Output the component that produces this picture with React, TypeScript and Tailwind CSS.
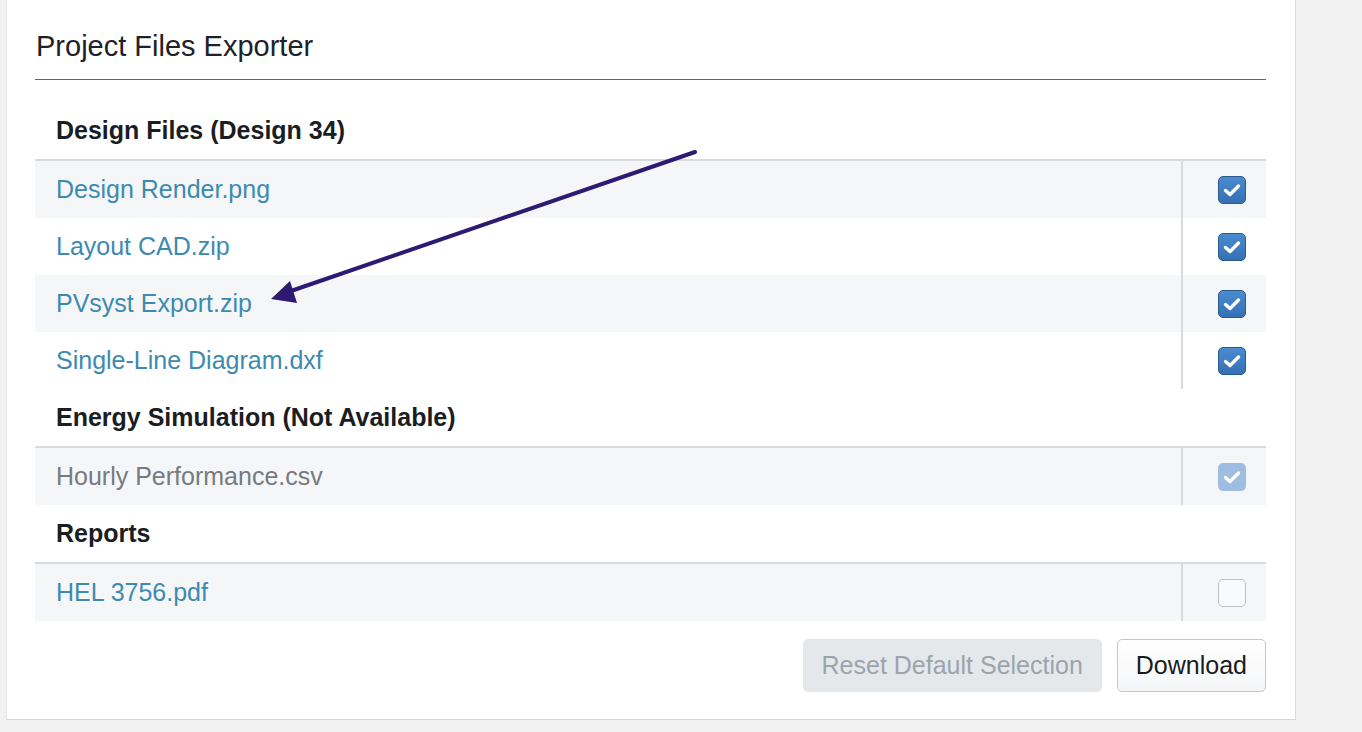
import React from 'react';

type FileRow = { name: string; checked: boolean; disabled?: boolean };

const sections: { title: string; rows: FileRow[] }[] = [
  {
    title: 'Design Files (Design 34)',
    rows: [
      { name: 'Design Render.png', checked: true },
      { name: 'Layout CAD.zip', checked: true },
      { name: 'PVsyst Export.zip', checked: true },
      { name: 'Single-Line Diagram.dxf', checked: true },
    ],
  },
  {
    title: 'Energy Simulation (Not Available)',
    rows: [{ name: 'Hourly Performance.csv', checked: true, disabled: true }],
  },
  {
    title: 'Reports',
    rows: [{ name: 'HEL 3756.pdf', checked: false }],
  },
];

const Checkbox: React.FC<{ checked: boolean; disabled?: boolean }> = ({ checked, disabled }) => {
  if (!checked) {
    return <div className="w-[28px] h-[28px] rounded-[5px] border border-[#bfc3c7] bg-[#f9fafb]" />;
  }
  return (
    <div
      className={
        disabled
          ? 'w-[28px] h-[28px] rounded-[5px] bg-[#9ebde0] flex items-center justify-center'
          : 'w-[28px] h-[28px] rounded-[5px] border border-[#2a5b8f] bg-gradient-to-b from-[#4b8bd0] to-[#3670b3] flex items-center justify-center'
      }
    >
      <svg width="20" height="16" viewBox="0 0 20 16" fill="none">
        <path d="M3.5 8.5 L8 12.5 L16.5 4" stroke="white" strokeWidth="3.4" strokeLinecap="round" strokeLinejoin="round" />
      </svg>
    </div>
  );
};

const App: React.FC = () => {
  return (
    <div className="relative w-[1362px] h-[732px] bg-[#f2f2f2] overflow-hidden font-['Liberation_Sans',Arial,sans-serif]">
      <div className="ml-[6px] w-[1290px] h-[720px] bg-white border-l border-[#e3e5e8] border-r border-b border-r-[#d6dde4] border-b-[#cfd8e1] pl-[28px] pr-[29px]">
        {/* Title */}
        <div className="pt-[29px] pb-[16px] border-b border-[#5f6770]">
          <h1 className="text-[29px] leading-[34px] text-[#1e2227] pl-[1px]">Project Files Exporter</h1>
        </div>

        <div className="pt-[22px]">
          {sections.map((section) => (
            <div key={section.title}>
              <div className="h-[59px] flex items-center pl-[21px] text-[25px] font-bold text-[#1a1d21] border-b-2 border-[#d8dadd]">
                {section.title}
              </div>
              {section.rows.map((row, i) => (
                <div
                  key={row.name}
                  className={`flex h-[57px] ${i % 2 === 0 ? 'bg-[#f5f6f8]' : 'bg-white'}`}
                >
                  <div
                    className={`flex-1 flex items-center pl-[21px] text-[25px] ${
                      row.disabled ? 'text-[#777b80]' : 'text-[#3d8ab0]'
                    }`}
                  >
                    {row.name}
                  </div>
                  <div className="w-[85px] border-l-2 border-[#d8dadd] flex items-center justify-end pr-[20px]">
                    <Checkbox checked={row.checked} disabled={row.disabled} />
                  </div>
                </div>
              ))}
            </div>
          ))}
        </div>

        <div className="flex justify-end gap-[15px] mt-[18px]">
          <button className="h-[53px] px-[19px] rounded-[5px] bg-[#e4e8eb] text-[25px] text-[#9ba4ac]">
            Reset Default Selection
          </button>
          <button className="h-[53px] px-[18px] rounded-[5px] border border-[#c3c7cb] bg-gradient-to-b from-white to-[#f5f6f7] text-[25px] text-[#1a1c1f]">
            Download
          </button>
        </div>
      </div>

      {/* annotation arrow */}
      <svg className="absolute inset-0 pointer-events-none" width="1362" height="732">
        <line x1="695" y1="152" x2="288" y2="292" stroke="#2d1a72" strokeWidth="4" strokeLinecap="round" />
        <polygon points="271,299 290,281 297,303" fill="#2d1a72" />
      </svg>
    </div>
  );
};

export default App;
